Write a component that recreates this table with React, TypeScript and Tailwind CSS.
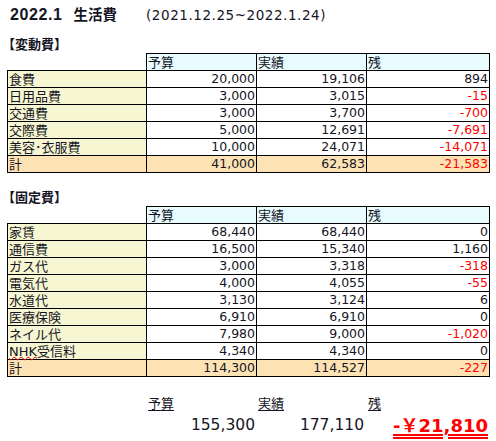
import React from "react"

type Row = [string, number, number, number]

const variableRows: Row[] = [
    ["食費", 20000, 19106, 894],
    ["日用品費", 3000, 3015, -15],
    ["交通費", 3000, 3700, -700],
    ["交際費", 5000, 12691, -7691],
    ["美容･衣服費", 10000, 24071, -14071],
]

const fixedRows: Row[] = [
    ["家賃", 68440, 68440, 0],
    ["通信費", 16500, 15340, 1160],
    ["ガス代", 3000, 3318, -318],
    ["電気代", 4000, 4055, -55],
    ["水道代", 3130, 3124, 6],
    ["医療保険", 6910, 6910, 0],
    ["ネイル代", 7980, 9000, -1020],
    ["NHK受信料", 4340, 4340, 0],
]

const fmt = (n: number) => n.toLocaleString("en-US")

function Label({ text }: { text: string }) {
    // spellcheck squiggle under NHK, as in the sheet
    if (text.startsWith("NHK")) {
        return (
            <span>
                <span className="relative z-10 underline decoration-wavy decoration-[#e00000] decoration-1 underline-offset-[0px]">NHK</span>
                {text.slice(3)}
            </span>
        )
    }
    return <span>{text}</span>
}

function Sheet({ rows, total }: { rows: Row[]; total: Row }) {
    const cols = "grid grid-cols-[140px_110px_110px_123px]"
    const cell = "border-t border-r border-black flex items-end"
    const num = "justify-end pr-[1px] pb-[2px] text-[12.5px] leading-none overflow-hidden"

    const renderRow = (r: Row, isTotal: boolean) => (
        <div key={r[0]} className={`${cols} ${isTotal ? "h-[18px]" : "h-[17px]"}`}>
            <div className={`${cell} border-l ${isTotal ? "border-b bg-[#fde2b4]" : "bg-[#f6f6d2]"} pl-[1px] pb-[1px] text-[13px] leading-none`}>
                <Label text={r[0]} />
            </div>
            <div className={`${cell} ${num} ${isTotal ? "border-b bg-[#fde2b4]" : "bg-white"}`}>{fmt(r[1])}</div>
            <div className={`${cell} ${num} ${isTotal ? "border-b bg-[#fde2b4]" : "bg-white"}`}>{fmt(r[2])}</div>
            <div className={`${cell} ${num} ${isTotal ? "border-b bg-[#fde2b4]" : "bg-white"} ${r[3] < 0 ? "text-[#ff0000]" : ""}`}>
                {fmt(r[3])}
            </div>
        </div>
    )

    return (
        <div className="ml-[7px] w-[483px]">
            <div className={`${cols} h-[17px]`}>
                <div className="border-r border-black"></div>
                <div className={`${cell} bg-[#e8fbff] pl-[1px] pb-[1px] text-[13px] leading-none`}>予算</div>
                <div className={`${cell} bg-[#e8fbff] pl-[1px] pb-[1px] text-[13px] leading-none`}>実績</div>
                <div className={`${cell} bg-[#e8fbff] pl-[1px] pb-[1px] text-[13px] leading-none`}>残</div>
            </div>
            {rows.map((r) => renderRow(r, false))}
            {renderRow(total, true)}
        </div>
    )
}

export default function App() {
    return (
        <div className="w-[496px] h-[441px] bg-white text-[#151525] font-['DejaVu_Sans','Noto_Sans_CJK_JP',sans-serif]">
            <div className="h-[32px] pl-[10px] pt-[7px] flex items-baseline">
                <span className="font-['Liberation_Sans','Noto_Sans_CJK_JP',sans-serif] font-bold text-[16px] tracking-[0.6px] leading-none">2022.1</span>
                <span className="ml-[11px] font-['Noto_Sans_CJK_JP',sans-serif] font-bold text-[14.5px] leading-none">生活費</span>
                <span className="ml-[29px] text-[13.5px] tracking-[0.55px] leading-none">(2021.12.25~2022.1.24)</span>
            </div>
            <div className="h-[21px] pl-[2px] flex items-end pb-[3px]">
                <span className="font-['Noto_Sans_CJK_JP',sans-serif] font-bold text-[13px] leading-none">【変動費】</span>
            </div>
            <Sheet rows={variableRows} total={["計", 41000, 62583, -21583]} />
            <div className="h-[33px] pl-[2px] flex items-end pb-[3px]">
                <span className="font-['Noto_Sans_CJK_JP',sans-serif] font-bold text-[13px] leading-none">【固定費】</span>
            </div>
            <Sheet rows={fixedRows} total={["計", 114300, 114527, -227]} />
            <div className="ml-[7px] mt-[20px] grid grid-cols-[140px_110px_110px_123px]">
                <div></div>
                <div className="pl-[1px] text-[13px] leading-none underline underline-offset-2">予算</div>
                <div className="pl-[1px] text-[13px] leading-none underline underline-offset-2">実績</div>
                <div className="pl-[1px] text-[13px] leading-none underline underline-offset-2">残</div>
                <div></div>
                <div className="mt-[8px] pr-[2px] text-right text-[15.5px] leading-none">155,300</div>
                <div className="mt-[8px] pr-[3px] text-right text-[15.5px] leading-none">177,110</div>
                <div className="mt-[7px] pr-[2px] text-right text-[18px] font-bold leading-none text-[#ff0000] underline decoration-double decoration-[#ff0000] decoration-[1.5px] underline-offset-[2px]">
                    -￥21,810
                </div>
            </div>
        </div>
    )
}
